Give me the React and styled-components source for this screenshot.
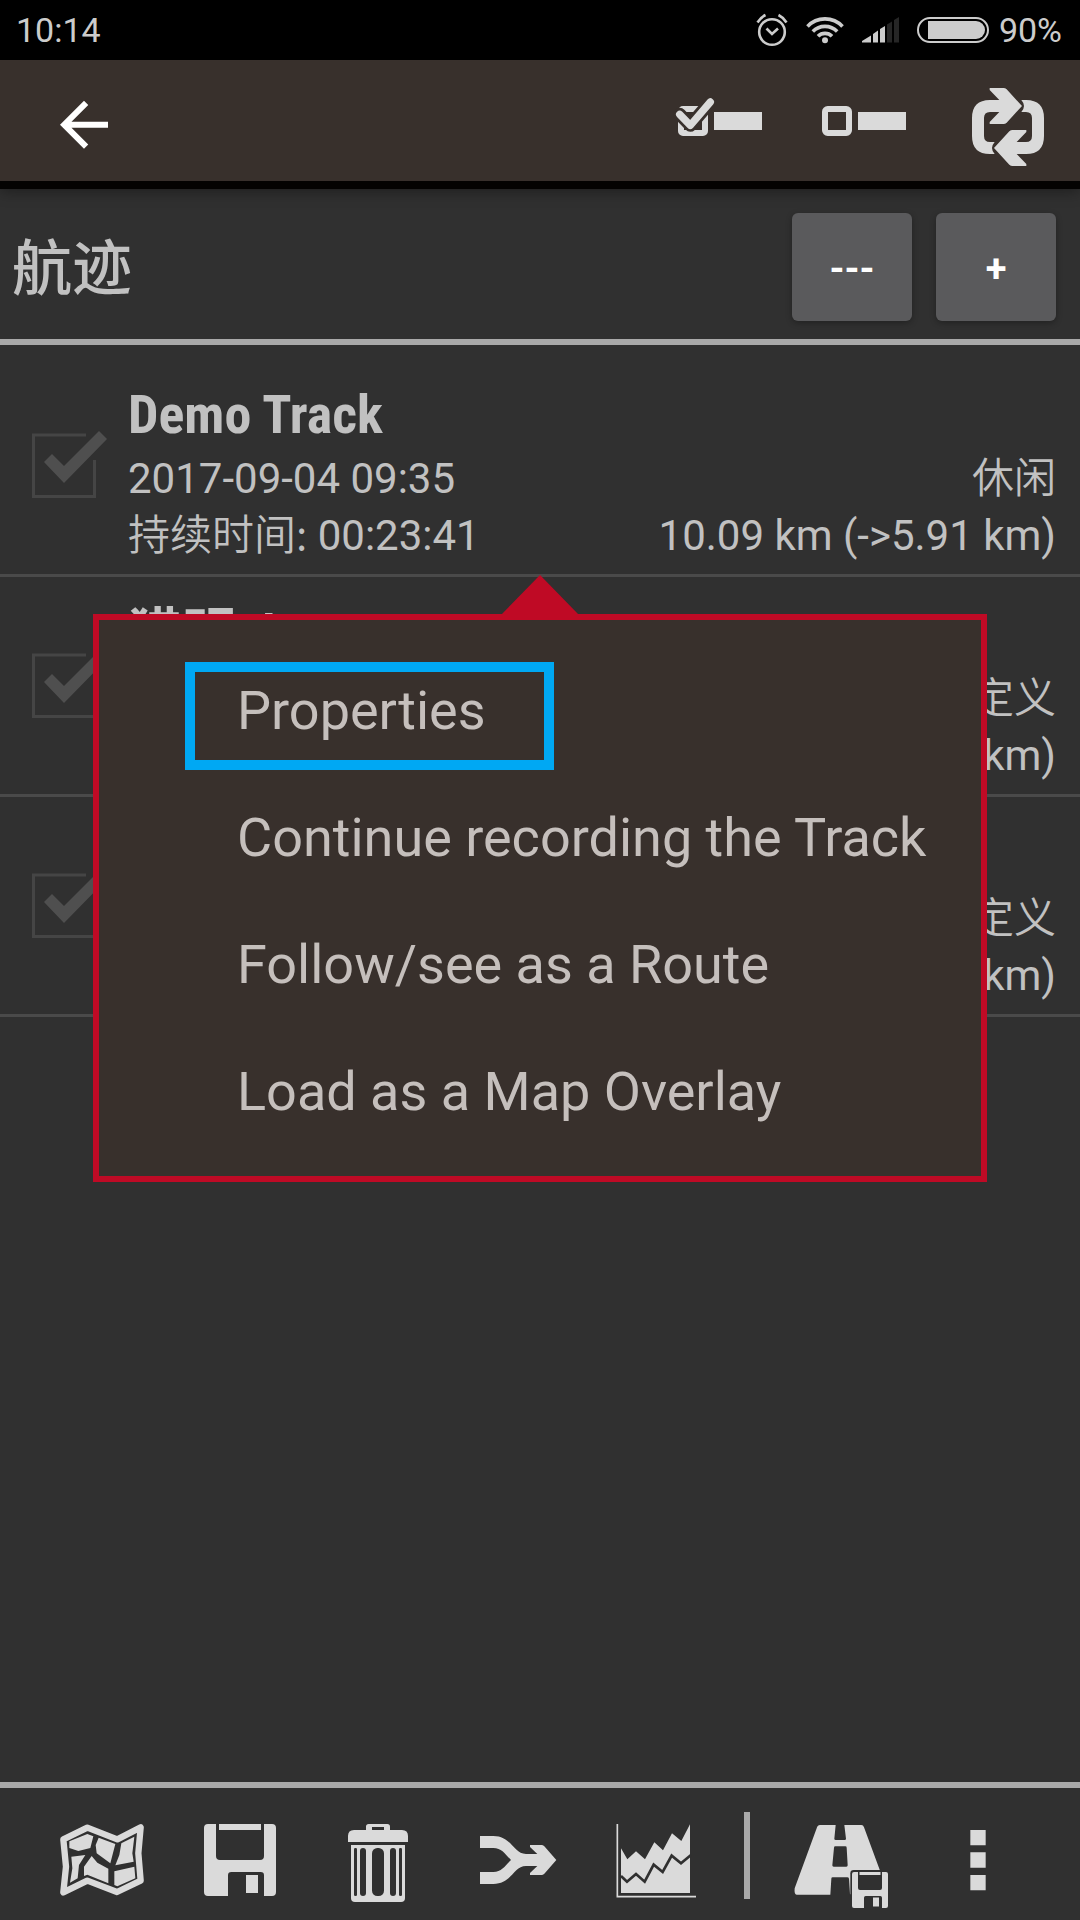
import React from 'react';
import styled, { createGlobalStyle } from 'styled-components';

const color = {
  page: '#303030',
  bar: '#38302c',
  text: '#c1c1c1',
  menuText: '#c5bfbc',
  icon: '#dadada',
  status: '#cccccc',
  line: '#a9a9a9',
  divider: '#4a4a4a',
  accent: '#bf0a25',
  mark: '#00a8f3',
};

const GlobalStyle = createGlobalStyle`
  *, *::before, *::after { box-sizing: border-box; }
  body {
    margin: 0;
    background: ${color.page};
    color: ${color.text};
    font-family: Roboto, "Noto Sans CJK SC", sans-serif;
  }
  button {
    margin: 0;
    padding: 0;
    border: 0;
    background: none;
    color: inherit;
    font: inherit;
    cursor: pointer;
  }
  svg { display: block; flex: none; }
`;

const Screen = styled.div`
  display: flex;
  flex-direction: column;
  min-height: 100vh;
`;

const StatusBar = styled.div`
  display: flex;
  align-items: center;
  justify-content: space-between;
  height: 60px;
  padding: 0 18px 0 16px;
  background: #000;
  color: ${color.status};
  font-size: 34px;
  line-height: 60px;
`;

const StatusIcons = styled.div`
  display: flex;
  align-items: center;
  gap: 18px;
`;

const Battery = styled.div`
  display: flex;
  align-items: center;
  gap: 10px;
`;

const AppBar = styled.header`
  position: relative;
  z-index: 1;
  display: flex;
  align-items: flex-start;
  height: 129px;
  border-bottom: 8px solid #040302;
  background: ${color.bar};
  box-shadow: 0 2px 14px rgba(0, 0, 0, 0.4);
`;

const BarButton = styled.button`
  display: flex;
  align-items: center;
  justify-content: center;
  width: ${(p) => (p.$wide ? 168 : 144)}px;
  height: 120px;
`;

const Spacer = styled.div`
  flex: 1;
`;

const TitleRow = styled.div`
  display: flex;
  align-items: center;
  gap: 24px;
  height: 156px;
  padding: 24px 24px 18px 12px;
  border-bottom: 6px solid ${color.line};
`;

const PageTitle = styled.h1`
  flex: 1;
  margin: 0;
  padding-bottom: 6px;
  font-family: "Noto Sans CJK SC", sans-serif;
  font-size: 60px;
  font-weight: 500;
  line-height: 84px;
`;

const SquareButton = styled.button`
  width: 120px;
  height: 108px;
  padding-top: 4px;
  border-radius: 6px;
  background: #5a5a5c;
  box-shadow: 0 2px 6px rgba(0, 0, 0, 0.3);
  color: #fff;
  font-size: 38px;
  font-weight: 700;
`;

const Main = styled.main`
  position: relative;
  flex: 1;
`;

const TrackList = styled.ul`
  margin: 0;
  padding: 12px 0 0;
  list-style: none;
`;

const TrackRow = styled.li`
  display: flex;
  align-items: center;
  gap: 16px;
  height: 220px;
  padding: 0 24px 0 16px;
  border-bottom: 3px solid ${color.divider};
`;

const Tick = styled.label`
  display: grid;
  flex: none;
  width: 96px;
  height: 96px;

  > * { grid-area: 1 / 1; }
  svg { pointer-events: none; }
`;

const TickInput = styled.input`
  width: 96px;
  height: 96px;
  margin: 0;
  appearance: none;
`;

const TrackText = styled.div`
  flex: 1;
  padding-top: 16px;
`;

const TrackName = styled.h2`
  height: 63px;
  margin: 0 0 4px;
  font-family: "Roboto Condensed", "Liberation Sans Narrow", "Noto Sans CJK SC", sans-serif;
  font-size: 54px;
  font-weight: 700;
  line-height: 63px;
`;

const TrackLine = styled.div`
  display: flex;
  justify-content: space-between;
  height: 57px;
  font-size: 42px;
  line-height: 57px;
`;

const Label = styled.span`
  font-family: "Noto Sans CJK SC", sans-serif;
  font-weight: 350;
  line-height: 1;
`;

const Popup = styled.div`
  position: absolute;
  top: 269px;
  right: 93px;
  left: 93px;
  padding: 27px 0 21px;
  border: 6px solid ${color.accent};
  background: ${color.bar};
  color: ${color.menuText};
`;

const Pointer = styled.svg`
  position: absolute;
  top: -45px;
  left: 50%;
  margin-left: -39px;
`;

const MenuItem = styled.button`
  position: relative;
  display: block;
  width: 100%;
  height: 127px;
  padding-left: 138px;
  font-size: 54px;
  line-height: 127px;
  text-align: left;
`;

const Highlight = styled.span`
  position: absolute;
  top: 15px;
  left: 86px;
  width: 369px;
  height: 108px;
  border: 10px solid ${color.mark};
`;

const Toolbar = styled.footer`
  display: flex;
  align-items: center;
  height: 138px;
  padding: 12px 33px 0;
  border-top: 6px solid ${color.line};
`;

const ToolButton = styled.button`
  display: flex;
  flex: 1;
  justify-content: center;
`;

const ToolDivider = styled.div`
  width: 6px;
  height: 87px;
  margin: 0 21px 9px;
  background: ${color.line};
`;

function Icon({ box, children }) {
  return (
    <svg width="96" height="96" viewBox={box} fill={color.icon} aria-hidden="true">
      {children}
    </svg>
  );
}

function AlarmIcon() {
  return (
    <svg width="32" height="34" viewBox="0 0 32 34" fill="none" stroke={color.status} strokeWidth="2.6">
      <circle cx="16" cy="19" r="12.8" />
      <path d="M10.5 15.5 16 21l6-5.5M1.5 9.500Q4.500 4.500 9.500 2M30.500 9.500Q27.500 4.500 22.500 2" />
    </svg>
  );
}

function WifiIcon() {
  return (
    <svg width="38" height="28" viewBox="0 0 38 28" fill="none" stroke={color.status} strokeWidth="3.6">
      <path d="M1.500 10.500A24 24 0 0 1 36.500 10.500M6.800 15.500A17 17 0 0 1 31.200 15.500M12 20.300A9.800 9.800 0 0 1 26 20.300" />
      <circle cx="19" cy="24.200" r="3" fill={color.status} stroke="none" />
    </svg>
  );
}

function SignalIcon() {
  return (
    <svg width="37" height="26" viewBox="0 0 37 26" fill={color.status}>
      <path d="M0 25.500V24L9 18.500v7zM11 25.500V17l5-3.500v12zM18 25.500V12l5-3v16.500z" />
      <path fill="#262626" d="M25 25.500V7.500l5-3v21zM32 25.500V3l5-3v25.500z" />
    </svg>
  );
}

function BatteryIcon() {
  return (
    <svg width="72" height="26" viewBox="0 0 72 26">
      <rect x="1" y="1" width="70" height="24" rx="12" fill="none" stroke={color.status} strokeWidth="2" />
      <path d="M11 4H59a9 9 0 0 1 0 18H11z" fill={color.status} />
    </svg>
  );
}

function BackIcon() {
  return (
    <svg width="72" height="72" viewBox="0 -1.600 24 24" fill="#fff" aria-hidden="true">
      <path d="M20 11H7.830l5.590-5.590L12 4l-8 8 8 8 1.410-1.410L7.830 13H20z" />
    </svg>
  );
}

function SelectAllIcon() {
  return (
    <Icon box="36 6 288 288">
      <rect x="63" y="117" width="72" height="72" rx="6" fill="none" stroke={color.icon} strokeWidth="18" />
      <g fill="none" strokeLinecap="round" strokeLinejoin="round">
        <path d="M59 133 91 166 151 96" stroke={color.bar} strokeWidth="39" />
        <path d="M59 133 91 166 151 96" stroke={color.icon} strokeWidth="22" />
      </g>
      <rect x="162" y="126" width="144" height="54" />
    </Icon>
  );
}

function SelectNoneIcon() {
  return (
    <Icon box="468 6 288 288">
      <rect x="495" y="117" width="72" height="72" rx="8" fill="none" stroke={color.icon} strokeWidth="18" />
      <rect x="594" y="126" width="144" height="54" />
    </Icon>
  );
}

const halfLoop =
  'M989 54H1030Q1036 54 1040 58L1086 108 1040 158Q1036 162 1030 162H989V156L1018 126H990Q972 126 972 144V198Q972 216 990 216H1004Q988 234 1004 252H990Q936 252 936 198V144Q936 90 990 90H1018L989 60Z';

function RepeatIcon() {
  return (
    <Icon box="900 6 288 288">
      <path d={halfLoop} />
      <path d={halfLoop} transform="rotate(180 1044 171)" />
    </Icon>
  );
}

function MapIcon() {
  return (
    <Icon box="162 126 288 288">
      <path
        d="M190 208 262 173 352 208 422 172 415 250 422 332 351 366 262 332 190 367 198 290Z"
        fill="none"
        stroke={color.icon}
        strokeWidth="19"
        strokeLinejoin="round"
      />
      <path d="M208 214 262 192 280 199 271 234 235 243 208 234ZM296 203 346 222 331 280 290 250 287 225ZM364 220 403 200 397 250 401 275 346 286 358 255ZM214 260 256 255 237 285 233 325 210 338 217 295ZM275 258 292 278 325 296V340L262 314 252 318V290ZM343 304 403 290 406 325 352 349 343 345Z" />
    </Icon>
  );
}

function Disk() {
  return (
    <path d="M648 162H624Q612 162 612 174V366Q612 378 624 378H684V316Q684 306 694 306H782Q792 306 792 316V378H816Q828 378 828 366V174Q828 162 816 162H792V258Q792 270 780 270H660Q648 270 648 258ZM657 162H783V180H657ZM738 315H774V369H738Z" />
  );
}

function SaveIcon() {
  return (
    <Icon box="576 126 288 288">
      <Disk />
    </Icon>
  );
}

function TrashIcon() {
  return (
    <Icon box="990 126 288 288">
      <path
        fillRule="evenodd"
        d="M1098 180V170Q1098 162 1106 162H1162Q1170 162 1170 170V180H1206Q1224 180 1224 198V216H1044V198Q1044 180 1062 180ZM1116 171V180H1152V171Z"
      />
      <path d="M1053 225H1215V384Q1215 396 1203 396H1065Q1053 396 1053 384Z" />
      <g fill={color.page}>
        <rect x="1062" y="234" width="9" height="144" rx="4" />
        <rect x="1080" y="234" width="18" height="144" rx="9" />
        <rect x="1116" y="234" width="36" height="144" rx="16" />
        <rect x="1170" y="234" width="18" height="144" rx="9" />
        <rect x="1197" y="234" width="9" height="144" rx="4" />
      </g>
    </Icon>
  );
}

function MergeIcon() {
  return (
    <Icon box="144 126 288 288">
      <path d="M180 198H220C275 198 280 252 318 252H352L330 231V225H364Q369 225 373 229L409 270 373 311Q369 315 364 315H330V309L352 288H318C280 288 275 342 220 342H180V306H220C245 306 255 288 273 270 255 252 245 234 220 234H180Z" />
    </Icon>
  );
}

function ChartIcon() {
  return (
    <Icon box="558 126 288 288">
      <path d="M592 162V380H828" fill="none" stroke={color.icon} strokeWidth="5" />
      <path d="M603 235 622 268 648 244 675 268 703 217 729 241 756 190 784 213 810 163V369H603Z" />
      <path
        d="M603 318 621 335 648 312 674 335 701 284 728 306 755 257 783 280 812 256"
        fill="none"
        stroke={color.page}
        strokeWidth="8"
      />
    </Icon>
  );
}

function SaveRouteIcon() {
  return (
    <Icon box="216 126 288 288">
      <path
        fillRule="evenodd"
        d="M300 165H347L343 206Q343 210 347 210H374Q378 210 378 206L373 165H424Q430 165 432 172L494 340V373H390L387 326Q386 322 382 322H338Q334 322 334 326L331 374H230Q222 374 224 355L290 175Q293 165 300 165ZM346 229Q342 229 342 233L337 286Q337 290 341 290H379Q383 290 383 286L380 233Q380 229 376 229Z"
      />
      <rect x="391" y="300" width="120" height="120" rx="10" fill={color.page} />
      <g transform="translate(90 225) scale(0.5)">
        <Disk />
      </g>
    </Icon>
  );
}

function MoreIcon() {
  return (
    <Icon box="630 126 288 288">
      <path d="M751 180h46v46h-46zM751 247h46v46h-46zM751 315h46v46h-46z" />
    </Icon>
  );
}

function TickIcon() {
  return (
    <svg width="96" height="96" viewBox="0 0 96 96" aria-hidden="true">
      <path d="M70 17H17.500V78.500H78.500V42" fill="none" stroke="#454545" strokeWidth="3" />
      <path d="M28 44 36 36 48 48 83 13 91 21 48 65Z" fill="#4f4f4f" />
    </svg>
  );
}

const tracks = [
  {
    name: 'Demo Track',
    date: '2017-09-04 09:35',
    kind: '休闲',
    label: '持续时间:',
    time: '00:23:41',
    distance: '10.09 km (->5.91 km)',
  },
  { name: '猎明 d', kind: '自定义', distance: 'km)' },
  { name: '', kind: '自定义', distance: 'km)' },
];

const menu = [
  'Properties',
  'Continue recording the Track',
  'Follow/see as a Route',
  'Load as a Map Overlay',
];

function Track({ track }) {
  return (
    <TrackRow>
      <Tick>
        <TickInput type="checkbox" aria-label={track.name || track.kind} />
        <TickIcon />
      </Tick>
      <TrackText>
        <TrackName>{track.name}</TrackName>
        <TrackLine>
          <span>{track.date}</span>
          <span>
            <Label>{track.kind}</Label>
          </span>
        </TrackLine>
        <TrackLine>
          <span>
            {track.label && <Label>{track.label}</Label>} {track.time}
          </span>
          <span>{track.distance}</span>
        </TrackLine>
      </TrackText>
    </TrackRow>
  );
}

export default function App() {
  return (
    <Screen>
      <GlobalStyle />
      <StatusBar>
        <span>10:14</span>
        <StatusIcons>
          <AlarmIcon />
          <WifiIcon />
          <SignalIcon />
          <Battery>
            <BatteryIcon />
            <span>90%</span>
          </Battery>
        </StatusIcons>
      </StatusBar>
      <AppBar>
        <BarButton $wide aria-label="Back">
          <BackIcon />
        </BarButton>
        <Spacer />
        <BarButton aria-label="Select all">
          <SelectAllIcon />
        </BarButton>
        <BarButton aria-label="Select none">
          <SelectNoneIcon />
        </BarButton>
        <BarButton aria-label="Invert selection">
          <RepeatIcon />
        </BarButton>
      </AppBar>
      <TitleRow>
        <PageTitle>航迹</PageTitle>
        <SquareButton>---</SquareButton>
        <SquareButton>+</SquareButton>
      </TitleRow>
      <Main>
        <TrackList>
          {tracks.map((track, i) => (
            <Track key={i} track={track} />
          ))}
        </TrackList>
        <Popup>
          <Pointer width="78" height="40" viewBox="0 0 78 40" fill={color.accent}>
            <path d="M39 0 78 40H0Z" />
          </Pointer>
          {menu.map((item, i) => (
            <MenuItem key={item}>
              {item}
              {i === 0 && <Highlight />}
            </MenuItem>
          ))}
        </Popup>
      </Main>
      <Toolbar>
        <ToolButton aria-label="Show on map"><MapIcon /></ToolButton>
        <ToolButton aria-label="Save"><SaveIcon /></ToolButton>
        <ToolButton aria-label="Delete"><TrashIcon /></ToolButton>
        <ToolButton aria-label="Merge"><MergeIcon /></ToolButton>
        <ToolButton aria-label="Statistics"><ChartIcon /></ToolButton>
        <ToolDivider />
        <ToolButton aria-label="Save as route"><SaveRouteIcon /></ToolButton>
        <ToolButton aria-label="More"><MoreIcon /></ToolButton>
      </Toolbar>
    </Screen>
  );
}
